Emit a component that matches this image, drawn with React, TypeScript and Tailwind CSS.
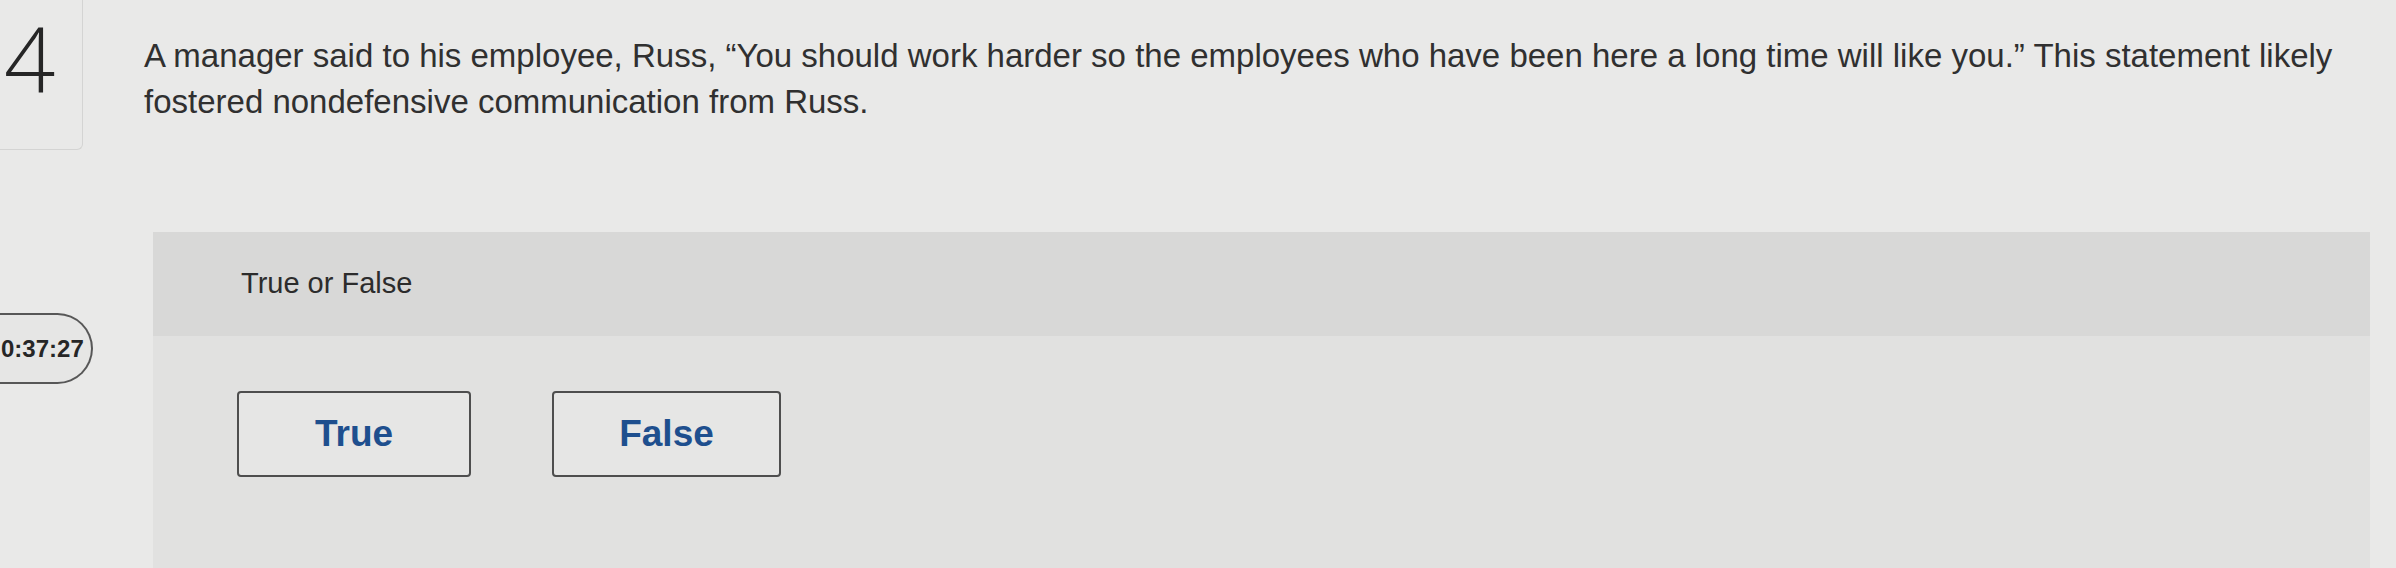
export default function App() {
    return (
        <div className="w-[2396px] h-[568px] bg-[#e9e9e8] flex overflow-hidden" style={{ fontFamily: '"Liberation Sans", Arial, sans-serif' }}>
            {/* Left rail: question number + timer */}
            <div className="w-[100px] shrink-0 flex flex-col">
                <div className="w-[83px] h-[150px] border-r border-b border-[#d4d4d3] rounded-br-md flex items-start justify-start">
                    <span className="ml-[4px] text-[90px] leading-[1.3] font-light text-[#262626]" style={{ fontFamily: '"Open Sans", sans-serif' }}>4</span>
                </div>
                <div className="mt-[163px] w-[93px] h-[71px] border-2 border-l-0 border-[#575757] rounded-r-[36px] bg-[#e6e6e5] flex items-center">
                    <span className="ml-[1px] text-[24px] font-bold text-[#262626]">0:37:27</span>
                </div>
            </div>

            {/* Question + answer panel */}
            <div className="flex-1 flex flex-col">
                <p className="pl-[44px] pt-[33px] text-[33px] leading-[46px] text-[#303030] w-[2290px]">
                    A manager said to his employee, Russ, “You should work harder so the employees who have been here a long time will like you.” This statement likely fostered nondefensive communication from Russ.
                </p>

                <div className="mt-[107px] ml-[53px] mr-[26px] flex-1 bg-[#e1e1e0] flex flex-col">
                    <div className="h-[104px] bg-[#d8d8d7] flex items-center pl-[88px]">
                        <span className="text-[29px] text-[#2c2c2c]">True or False</span>
                    </div>
                    <div className="flex gap-[81px] pl-[84px] pt-[55px]">
                        <button className="w-[234px] h-[86px] border-2 border-[#4e4e4e] rounded-[4px] bg-[#e6e6e5] text-[37px] font-bold text-[#1e4f8e]">
                            True
                        </button>
                        <button className="w-[229px] h-[86px] border-2 border-[#4e4e4e] rounded-[4px] bg-[#e6e6e5] text-[37px] font-bold text-[#1e4f8e]">
                            False
                        </button>
                    </div>
                </div>
            </div>
        </div>
    );
}
